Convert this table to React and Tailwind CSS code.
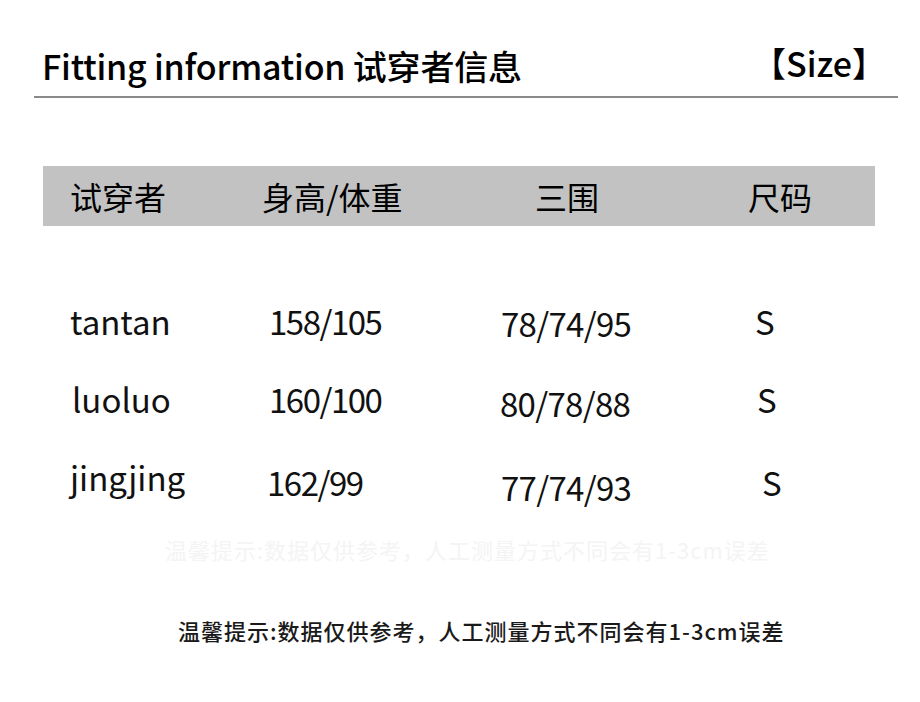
import React from "react";

const cjk = { fontFamily: '"Noto Sans CJK SC", "Noto Sans", sans-serif' };

const rows = [
  { name: "tantan", hw: "158/105", bust: "78/74/95", size: "S", o: [0, 0, 2, 0], x: [0, 0, 0, 0] },
  { name: "luoluo", hw: "160/100", bust: "80/78/88", size: "S", o: [0, 0, 4, 0], x: [2, 0, -1, 2] },
  { name: "jingjing", hw: "162/99", bust: "77/74/93", size: "S", o: [0, 5, 10, 5], x: [0, -2, 0, 7] },
];

export default function App() {
  return (
    <div className="w-[920px] h-[702px] bg-white overflow-hidden text-[#111]" style={cjk}>
      {/* title */}
      <div className="flex items-center justify-between pl-[42px] pr-[34px] pt-[42px] h-[90px]">
        <div className="text-[34px] font-medium leading-none tracking-[-0.2px] text-black">Fitting information 试穿者信息</div>
        <div className="text-[34px] font-medium leading-none text-black -mt-[6px]">【Size】</div>
      </div>
      <div className="ml-[34px] mt-[6px] w-[864px] h-[2px] bg-[#8a8a8a]" />

      {/* header bar */}
      <div className="ml-[43px] mt-[68px] w-[832px] h-[60px] bg-[#c2c2c2] flex items-center text-[32px] leading-none text-black">
        <div className="w-[219px] pl-[27px]">试穿者</div>
        <div className="w-[273px]">身高/体重</div>
        <div className="w-[213px]">三围</div>
        <div>尺码</div>
      </div>

      {/* rows */}
      <div className="mt-[76px] flex flex-col gap-[40px]">
        {rows.map((r) => (
          <div key={r.name} className="flex items-center h-[38px] text-[33px] leading-none text-[#111]">
            <div className="w-[269px] pl-[70px]" style={{ transform: `translate(${r.x[0]}px, ${r.o[0]}px)` }}>{r.name}</div>
            <div className="w-[232px] tracking-[-1.5px]" style={{ transform: `translate(${r.x[1]}px, ${r.o[1]}px)` }}>{r.hw}</div>
            <div className="w-[254px] tracking-[-0.7px]" style={{ transform: `translate(${r.x[2]}px, ${r.o[2]}px)` }}>{r.bust}</div>
            <div style={{ transform: `translate(${r.x[3]}px, ${r.o[3]}px)` }}>{r.size}</div>
          </div>
        ))}
      </div>

      {/* ghost text */}
      <div className="mt-[42px] pl-[165px] text-[22px] tracking-[1px] leading-none text-[#f4f4f4]">
        温馨提示:数据仅供参考，人工测量方式不同会有1-3cm误差
      </div>

      {/* footer note */}
      <div className="mt-[59px] pl-[178px] text-[22px] font-medium tracking-[1px] leading-none text-[#1a1a1a]">
        温馨提示:数据仅供参考，人工测量方式不同会有1-3cm误差
      </div>
    </div>
  );
}
